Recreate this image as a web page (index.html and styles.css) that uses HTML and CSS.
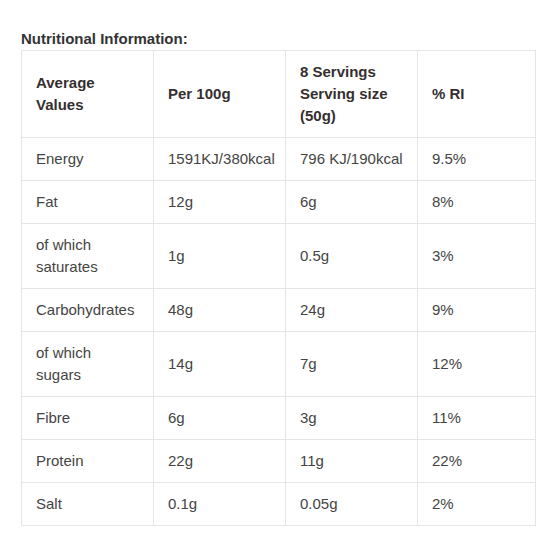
FILE: index.html
```html
<!DOCTYPE html>
<html>
<head lang="en">
    <meta charset="UTF-8">
    <title>Nutritional Information</title>
    <link rel="stylesheet" href="styles.css">
</head>
<body>
<div class="nutrition">
    <h4 class="nutrition-title">Nutritional Information:</h4>
    <table class="nutrition-table">
        <colgroup>
            <col class="col-name">
            <col class="col-per">
            <col class="col-serving">
            <col class="col-ri">
        </colgroup>
        <thead>
        <tr>
            <th>Average Values</th>
            <th>Per 100g</th>
            <th>8 Servings Serving size (50g)</th>
            <th>% RI</th>
        </tr>
        </thead>
        <tbody>
        <tr><td>Energy</td><td>1591KJ/380kcal</td><td>796 KJ/190kcal</td><td>9.5%</td></tr>
        <tr><td>Fat</td><td>12g</td><td>6g</td><td>8%</td></tr>
        <tr><td>of which saturates</td><td>1g</td><td>0.5g</td><td>3%</td></tr>
        <tr><td>Carbohydrates</td><td>48g</td><td>24g</td><td>9%</td></tr>
        <tr><td>of which sugars</td><td>14g</td><td>7g</td><td>12%</td></tr>
        <tr><td>Fibre</td><td>6g</td><td>3g</td><td>11%</td></tr>
        <tr><td>Protein</td><td>22g</td><td>11g</td><td>22%</td></tr>
        <tr><td>Salt</td><td>0.1g</td><td>0.05g</td><td>2%</td></tr>
        </tbody>
    </table>
</div>
</body>
</html>
```

FILE: styles.css
```css
body{
    margin: 0;
    background: #fff;
    color: #444;
    font: 15px/22px "Liberation Sans", Arial, sans-serif;
}
.nutrition{
    padding: 28px 0 0 21px;
}
.nutrition-title{
    margin: 0;
    font-size: 15px;
    line-height: 22px;
    font-weight: bold;
    color: #333;
}
.nutrition-table{
    width: 514px;
    table-layout: fixed;
    border-collapse: collapse;
}
.col-name,
.col-per,
.col-serving{
    width: 132px;
}
.col-ri{
    width: 118px;
}
.nutrition-table th,
.nutrition-table td{
    border: 1px solid #e5e5e5;
    padding: 10px 14px;
    text-align: left;
    vertical-align: middle;
}
.nutrition-table th{
    font-weight: bold;
    color: #352f2f;
}
```
